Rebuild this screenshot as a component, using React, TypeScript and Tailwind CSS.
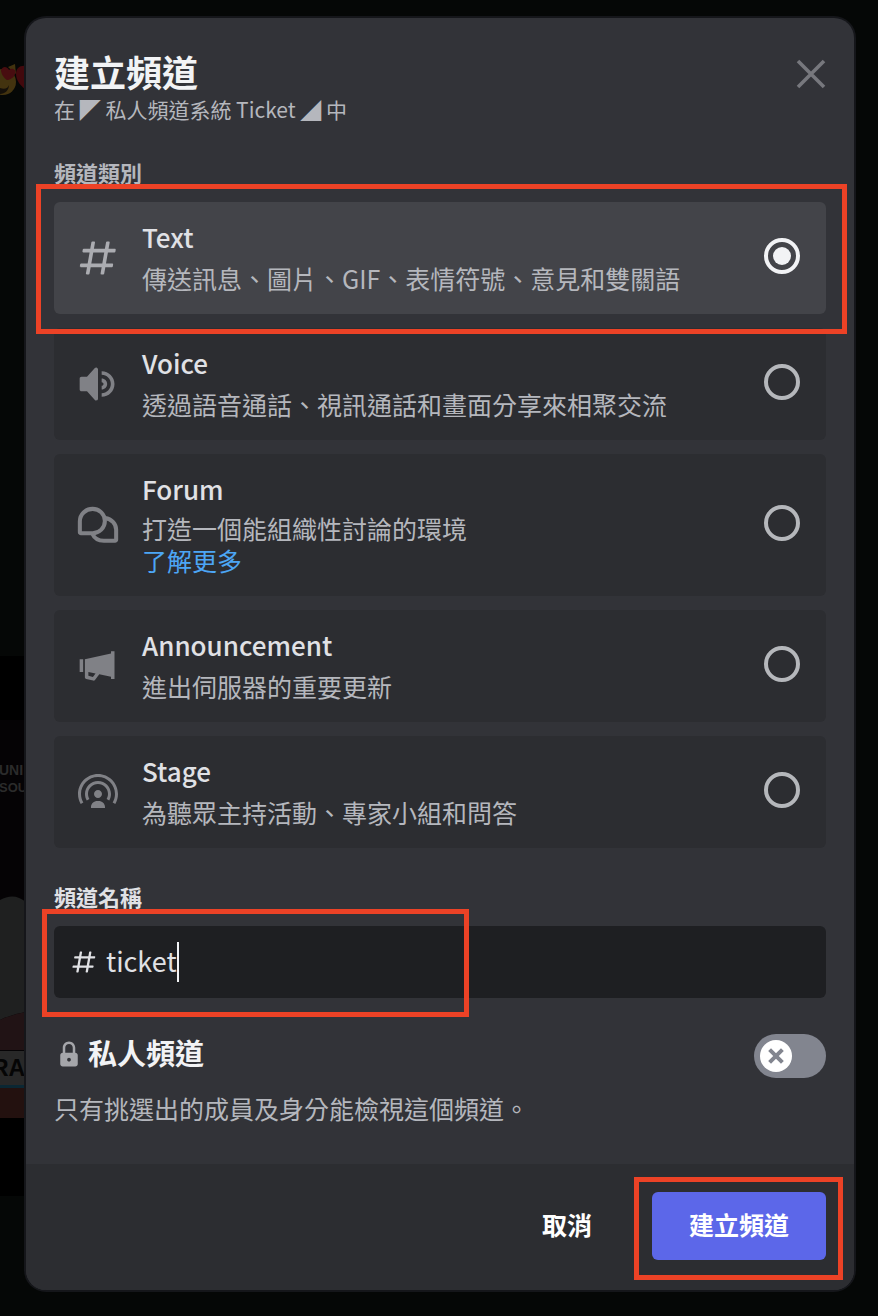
import { useState, type ReactNode } from "react";

const HASH_PATH =
  "M5.88657 21C5.57547 21 5.3399 20.7189 5.39427 20.4126L6.00001 17H2.59511C2.28449 17 2.04905 16.7198 2.10259 16.4138L2.27759 15.4138C2.31946 15.1746 2.52722 15 2.77011 15H6.35001L7.41001 9H4.00511C3.69449 9 3.45905 8.71977 3.51259 8.41381L3.68759 7.41381C3.72946 7.17456 3.93722 7 4.18011 7H7.76001L8.39677 3.41262C8.43914 3.17391 8.64664 3 8.88907 3H9.87344C10.1845 3 10.4201 3.28107 10.3657 3.58738L9.76001 7H15.76L16.3968 3.41262C16.4391 3.17391 16.6466 3 16.8891 3H17.8734C18.1845 3 18.4201 3.28107 18.3657 3.58738L17.76 7H21.1649C21.4755 7 21.711 7.28023 21.6574 7.58619L21.4824 8.58619C21.4406 8.82544 21.2328 9 20.9899 9H17.41L16.35 15H19.7549C20.0655 15 20.301 15.2802 20.2474 15.5862L20.0724 16.5862C20.0306 16.8254 19.8228 17 19.5799 17H16L15.3632 20.5874C15.3209 20.8261 15.1134 21 14.8709 21H13.8866C13.5755 21 13.3399 20.7189 13.3943 20.4126L14 17H8.00001L7.36325 20.5874C7.32088 20.8261 7.11337 21 6.87094 21H5.88657ZM9.41001 9L8.35001 15H14.35L15.41 9H9.41001Z";

const icons: Record<string, ReactNode> = {
  text: (
    <svg viewBox="0 0 24 24" className="size-11 fill-current" aria-hidden="true">
      <path d={HASH_PATH} />
    </svg>
  ),
  voice: (
    <svg viewBox="0 0 24 24" className="size-11 fill-current" aria-hidden="true">
      <path d="M11.383 3.07904C11.009 2.92504 10.579 3.01004 10.293 3.29604L6 8.00204H3C2.45 8.00204 2 8.45304 2 9.00204V15.002C2 15.552 2.45 16.002 3 16.002H6L10.293 20.71C10.579 20.996 11.009 21.082 11.383 20.927C11.757 20.772 12 20.407 12 20.002V4.00204C12 3.59904 11.757 3.23204 11.383 3.07904ZM14 5.00195V7.00195C16.757 7.00195 19 9.24595 19 12.002C19 14.759 16.757 17.002 14 17.002V19.002C17.86 19.002 21 15.863 21 12.002C21 8.14295 17.86 5.00195 14 5.00195ZM14 9.00195C15.654 9.00195 17 10.349 17 12.002C17 13.657 15.654 15.002 14 15.002V13.002C14.551 13.002 15 12.553 15 12.002C15 11.451 14.551 11.002 14 11.002V9.00195Z" />
    </svg>
  ),
  forum: (
    <svg viewBox="0 0 24 24" className="size-11 fill-none stroke-current" strokeWidth="2.2" aria-hidden="true">
      <path d="M9.1 3.2A6.65 6.65 0 0 1 9.1 16.5H2.7A.6.6 0 0 1 2.1 15.9V10A6.9 6.8 0 0 1 9.1 3.2Z" />
      <path d="M15.8 8.2C19.6 8.7 21.9 11.4 21.9 14.6V20A.6.6 0 0 1 21.3 20.6H15.2C12.2 20.6 10 19.3 8.9 16.8" />
    </svg>
  ),
  announcement: (
    <svg viewBox="0 0 24 24" className="size-11 fill-current" aria-hidden="true">
      <path d="M3.9 8.26H2V15.2941H3.9V8.26ZM19.1 4V5.12659L4.85 8.26447V18.1176C4.85 18.5496 5.1464 18.9252 5.5701 19.0315L9.3701 19.9727C9.4461 19.9906 9.524 20 9.6 20C9.89545 20 10.1776 19.8635 10.36 19.6235L12.7065 16.5242L19.1 17.9304V19.0588H21V4H19.1ZM9.2181 17.9944L6.75 17.3826V15.2113L10.6706 16.0753L9.2181 17.9944Z" />
    </svg>
  ),
  stage: (
    <svg viewBox="1 1 22 22" className="size-11 fill-current" aria-hidden="true">
      <path d="M14 13C14 14.1 13.1 15 12 15C10.9 15 10 14.1 10 13C10 11.9 10.9 11 12 11C13.1 11 14 11.9 14 13ZM8.5 20V19.5C8.5 17.8 9.94 16.5 11.75 16.5H12.25C14.06 16.5 15.5 17.8 15.5 19.5V20H8.5ZM7 13C7 10.24 9.24 8 12 8C14.76 8 17 10.24 17 13C17 13.91 16.74 14.75 16.31 15.49L17.62 16.25C18.17 15.29 18.5 14.19 18.5 13C18.5 9.42 15.58 6.5 12 6.5C8.42 6.5 5.5 9.42 5.5 13C5.5 14.18 5.82 15.29 6.38 16.25L7.69 15.49C7.26 14.75 7 13.91 7 13ZM12 3C6.49 3 2 7.49 2 13C2 14.82 2.5 16.53 3.36 18L4.66 17.24C3.93 16 3.5 14.55 3.5 13C3.5 8.31 7.31 4.5 12 4.5C16.69 4.5 20.5 8.31 20.5 13C20.5 14.55 20.07 16 19.34 17.24L20.64 18C21.5 16.53 22 14.82 22 13C22 7.49 17.51 3 12 3Z" />
    </svg>
  ),
};

const channelTypes = [
  { id: "text", title: "Text", description: "傳送訊息、圖片、GIF、表情符號、意見和雙關語" },
  { id: "voice", title: "Voice", description: "透過語音通話、視訊通話和畫面分享來相聚交流" },
  { id: "forum", title: "Forum", description: "打造一個能組織性討論的環境", link: "了解更多" },
  { id: "announcement", title: "Announcement", description: "進出伺服器的重要更新" },
  { id: "stage", title: "Stage", description: "為聽眾主持活動、專家小組和問答" },
];

/* Dimmed chat content that shows beside the dialog. */
function Backdrop() {
  return (
    <div className="absolute inset-y-0 left-0 w-[26px] overflow-hidden" aria-hidden="true">
      <svg viewBox="0 0 26 1316" className="h-[1316px] w-[26px]">
        <circle cx="3" cy="82" r="13" fill="#43330f" />
        <path d="M8 67l7-3 1 10z" fill="#43330f" />
        <path d="M1 70c2-5 7-3 8 0 3-3 8 0 6 4-1 4-6 6-8 6-3-2-6-6-6-10z" fill="#480d10" />
        <path d="M0 88c5 2 8 0 9-3 0 5-4 9-9 9z" fill="#15100a" />
        <path d="M26 66c-6-1-10 2-10 8 0 7 5 12 10 16z" fill="#42090d" />
        <rect y="656" width="26" height="540" fill="#000" />
        <rect y="720" width="26" height="398" fill="#050305" />
        <path d="M0 900Q14 892 26 902V1012Q12 1014 0 1020Z" fill="#1f2020" />
        <path d="M0 1020Q12 1014 26 1012V1050H0Z" fill="#211315" />
        <rect y="1051" width="26" height="34" fill="#282828" />
        <rect y="1085" width="26" height="3" fill="#0b2733" />
        <rect y="1088" width="26" height="30" fill="#23110f" />
        <g fontFamily="Liberation Sans, sans-serif" fontWeight="700">
          <text x="-1" y="775" fontSize="14" fill="#2b2b2b">UNI</text>
          <text x="-1" y="792" fontSize="13" fill="#2b2b2b">SOU</text>
          <text x="-8" y="1076" fontSize="23" fill="#050505">RA</text>
        </g>
      </svg>
    </div>
  );
}

export default function App() {
  const [selected, setSelected] = useState("text");
  const [name, setName] = useState("ticket");
  const [isPrivate, setIsPrivate] = useState(false);

  return (
    <div className="relative min-h-screen bg-[#050706] pt-[18px] pr-6 pb-[26px] pl-[26px] font-['Noto_Sans_CJK_TC','Noto_Sans',sans-serif]">
      <Backdrop />
      <main
        role="dialog"
        aria-labelledby="dialog-title"
        className="relative rounded-[20px] bg-[#323338] ring-2 ring-[#15161a]"
      >
        <div className="px-7 pt-[31px] pb-10">
          <header className="flex items-start justify-between">
            <div>
              <h1 id="dialog-title" className="text-[36px] leading-[44px] font-bold text-[#f2f3f5]">建立頻道</h1>
              <p className="text-[21px] leading-8 text-[#b5b7bd]">在 ◤ 私人頻道系統 Ticket ◢ 中</p>
            </div>
            <button type="button" aria-label="關閉" className="mt-2.5 text-[#77787d]">
              <svg viewBox="0 0 30 30" className="size-[30px] fill-none stroke-current" strokeWidth="3.6" aria-hidden="true">
                <path d="M2 2L28 28M28 2L2 28" />
              </svg>
            </button>
          </header>

          <fieldset className="mt-[35px]">
            <legend className="mb-[18px] text-[22px] leading-6 font-bold text-[#b5b7bd]">頻道類別</legend>
            <div className="flex flex-col gap-[14px]">
              {channelTypes.map((type) => (
                <div
                  key={type.id}
                  className={
                    selected === type.id
                      ? "relative flex items-center rounded-md bg-[#434449] pr-[26px] pl-[22px] text-[#abacb1]"
                      : "relative flex items-center rounded-md bg-[#2c2d31] pr-[26px] pl-[22px] text-[#808186]"
                  }
                >
                  {icons[type.id]}
                  <div className="ml-[22px] grow pt-4 pb-5">
                    <label htmlFor={type.id} className="block text-[26px] leading-[38px] font-medium text-[#e0e1e5]">
                      {type.title}
                    </label>
                    <p className={type.link ? "mt-1 text-[25px] leading-8 text-[#b5b7bd]" : "mt-1.5 text-[25px] leading-8 text-[#b5b7bd]"}>
                      {type.description}
                      {type.link && (
                        <>
                          <br />
                          <a href="#forum" className="text-[#4ca6f5]">{type.link}</a>
                        </>
                      )}
                    </p>
                  </div>
                  <input
                    id={type.id}
                    type="radio"
                    name="channel-type"
                    checked={selected === type.id}
                    onChange={() => setSelected(type.id)}
                    className="mb-1 size-9 shrink-0 appearance-none rounded-full border-4 border-[#b5b7bb] bg-clip-content p-[5px] checked:border-[#f2f3f5] checked:bg-[#f2f3f5]"
                  />
                  {type.id === "text" && (
                    <div className="pointer-events-none absolute -top-[18px] -right-[21px] -bottom-5 -left-[18px] z-10 border-5 border-[#ec4226]" />
                  )}
                </div>
              ))}
            </div>
          </fieldset>

          <label htmlFor="channel-name" className="mt-9 block text-[22px] leading-6 font-bold text-[#e0e1e5]">
            頻道名稱
          </label>
          <div className="relative mt-[18px] flex h-[72px] items-center rounded-md bg-[#1e1f22] px-4 text-[#e0e1e5]">
            <svg viewBox="0 0 24 24" className="mr-2 size-7 fill-current" aria-hidden="true">
              <path d={HASH_PATH} />
            </svg>
            <input
              id="channel-name"
              type="text"
              value={name}
              onChange={(event) => setName(event.target.value)}
              className="h-11 bg-transparent pb-1 text-[27px] caret-transparent outline-none [field-sizing:content]"
            />
            <span className="h-10 w-0.5 bg-[#f2f3f5]" />
            <div className="pointer-events-none absolute -top-[17px] -bottom-[19px] -left-3 z-10 w-[427px] border-5 border-[#ec4226]" />
          </div>

          <div className="mt-9 flex items-center justify-between">
            <label htmlFor="private" className="flex items-center gap-1 pb-1 text-[29px] leading-10 font-bold text-[#f2f3f5]">
              <svg viewBox="0 0 24 24" className="size-[30px] fill-[#a5a6aa]" aria-hidden="true">
                <path d="M17 11V7C17 4.243 14.756 2 12 2C9.242 2 7 4.243 7 7V11C5.897 11 5 11.896 5 13V20C5 21.103 5.897 22 7 22H17C18.103 22 19 21.103 19 20V13C19 11.896 18.103 11 17 11ZM12 18C11.172 18 10.5 17.328 10.5 16.5C10.5 15.672 11.172 15 12 15C12.828 15 13.5 15.672 13.5 16.5C13.5 17.328 12.828 18 12 18ZM15 11H9V7C9 5.346 10.346 4 12 4C13.654 4 15 5.346 15 7V11Z" />
              </svg>
              <span className="pb-1 leading-9">私人頻道</span>
            </label>
            <label className="flex h-11 w-[72px] items-center rounded-full bg-[#82858f] px-1.5 has-checked:justify-end has-checked:bg-[#23a55a]">
              <input
                id="private"
                type="checkbox"
                role="switch"
                checked={isPrivate}
                onChange={() => setIsPrivate(!isPrivate)}
                className="sr-only"
              />
              <svg viewBox="0 0 32 32" className="size-8" aria-hidden="true">
                <circle cx="16" cy="16" r="16" fill="#fff" />
                <path d="M9.6 9.6L22.4 22.4M22.4 9.6L9.6 22.4" stroke="#82858f" strokeWidth="4" />
              </svg>
            </label>
          </div>
          <p className="mt-[14px] text-[25px] leading-8 text-[#b5b7bd]">只有挑選出的成員及身分能檢視這個頻道。</p>
        </div>

        <footer className="flex items-center justify-end rounded-b-[20px] bg-[#2c2d31] px-7 pt-7 pb-[30px] text-[25px] font-bold text-white">
          <button type="button" className="mr-6 px-9 pb-0.5">取消</button>
          <div className="relative">
            <button type="button" className="h-[68px] rounded-md bg-[#5c67e9] px-[37px] pb-0.5">建立頻道</button>
            <div className="pointer-events-none absolute -top-[15px] -right-[17px] -bottom-5 -left-[18px] border-5 border-[#ec4226]" />
          </div>
        </footer>
      </main>
    </div>
  );
}
